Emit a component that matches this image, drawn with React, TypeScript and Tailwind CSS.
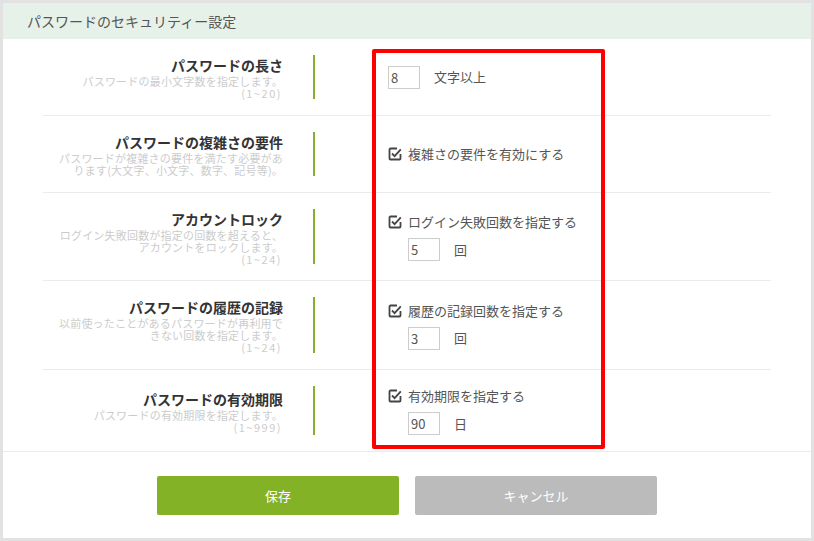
import React from "react";

const font = { fontFamily: '"Noto Sans CJK JP", "Noto Sans", sans-serif' };

function CheckIcon() {
  return (
    <svg width="14" height="14" viewBox="0 0 14 14" className="shrink-0">
      <path
        d="M9 1.5H2.5a1 1 0 0 0-1 1v9a1 1 0 0 0 1 1h9a1 1 0 0 0 1-1V7"
        fill="none"
        stroke="#444"
        strokeWidth="1.8"
      />
      <path d="M4 6.5l2.6 2.6L12.8 2.3" fill="none" stroke="#444" strokeWidth="1.8" />
    </svg>
  );
}

function NumBox({ value, unit }: { value: string; unit: string }) {
  return (
    <div className="flex items-center">
      <div className="w-[32px] h-[23px] border border-[#cccccc] text-[13px] text-[#555] leading-[21px] pl-[2px]">
        {value}
      </div>
      <span className="ml-[14px] text-[13px] text-[#555]">{unit}</span>
    </div>
  );
}

function CheckLine({ label }: { label: string }) {
  return (
    <div className="flex items-center gap-[6px] text-[13px] text-[#555] h-[20px]">
      <CheckIcon />
      {label}
    </div>
  );
}

type Row = {
  title: string;
  desc: string[];
  content: React.ReactNode;
};

const rows: Row[] = [
  {
    title: "パスワードの長さ",
    desc: ["パスワードの最小文字数を指定します。", "(1~20)"],
    content: <NumBox value="8" unit="文字以上" />,
  },
  {
    title: "パスワードの複雑さの要件",
    desc: ["パスワードが複雑さの要件を満たす必要があ", "ります(大文字、小文字、数字、記号等)。"],
    content: <CheckLine label="複雑さの要件を有効にする" />,
  },
  {
    title: "アカウントロック",
    desc: ["ログイン失敗回数が指定の回数を超えると、", "アカウントをロックします。", "(1~24)"],
    content: (
      <div className="flex flex-col gap-[6px]">
        <CheckLine label="ログイン失敗回数を指定する" />
        <div className="pl-[20px]">
          <NumBox value="5" unit="回" />
        </div>
      </div>
    ),
  },
  {
    title: "パスワードの履歴の記録",
    desc: ["以前使ったことがあるパスワードが再利用で", "きない回数を指定します。", "(1~24)"],
    content: (
      <div className="flex flex-col gap-[6px]">
        <CheckLine label="履歴の記録回数を指定する" />
        <div className="pl-[20px]">
          <NumBox value="3" unit="回" />
        </div>
      </div>
    ),
  },
  {
    title: "パスワードの有効期限",
    desc: ["パスワードの有効期限を指定します。", "(1~999)"],
    content: (
      <div className="flex flex-col gap-[6px]">
        <CheckLine label="有効期限を指定する" />
        <div className="pl-[20px]">
          <NumBox value="90" unit="日" />
        </div>
      </div>
    ),
  },
];

const heights = ["h-[77px]", "h-[77px]", "h-[88px]", "h-[89px]", "h-[81px]"];

export default function App() {
  return (
    <div className="w-[814px] h-[541px] bg-[#e2e2e2] p-[3px]" style={font}>
      <div className="relative bg-white h-[535px] flex flex-col">
        {/* Header */}
        <div className="h-[36px] bg-[#e6f1e9] flex items-center pl-[24px] text-[14px] text-[#555]">
          パスワードのセキュリティー設定
        </div>

        {/* Rows */}
        <div className="px-[40px]">
          {rows.map((row, i) => (
            <div
              key={row.title}
              className={`flex items-center ${heights[i]} ${
                i < rows.length - 1 ? "border-b border-[#ebebeb]" : ""
              }`}
            >
              <div className="w-[240px] text-right">
                <div className="text-[14px] leading-[20px] font-bold text-[#333]">{row.title}</div>
                {row.desc.map((d) => (
                  <div
                    key={d}
                    className={`text-[11px] leading-[12px] text-[#cccccc] ${
                      d.startsWith("(") ? "tracking-[1.5px] pr-[1px]" : "tracking-[0.2px]"
                    }`}
                  >
                    {d}
                  </div>
                ))}
              </div>
              <div className="ml-[30px] w-[2px] self-stretch my-[16px] bg-[#86b02c]" />
              <div className="pl-[73px]">{row.content}</div>
            </div>
          ))}
        </div>

        {/* Footer */}
        <div className="border-t border-[#ebebeb] flex-1 flex justify-center gap-[16px] pt-[24px]">
          <button className="w-[242px] h-[39px] bg-[#84b227] text-white text-[13px] rounded-[2px]">
            保存
          </button>
          <button className="w-[242px] h-[39px] bg-[#bbbbbb] text-white text-[13px] rounded-[2px]">
            キャンセル
          </button>
        </div>

        {/* Annotation box */}
        <div className="absolute left-[369px] top-[46px] w-[233px] h-[400px] border-[4px] border-[#ff0000] rounded-[2px] pointer-events-none" />
      </div>
    </div>
  );
}
